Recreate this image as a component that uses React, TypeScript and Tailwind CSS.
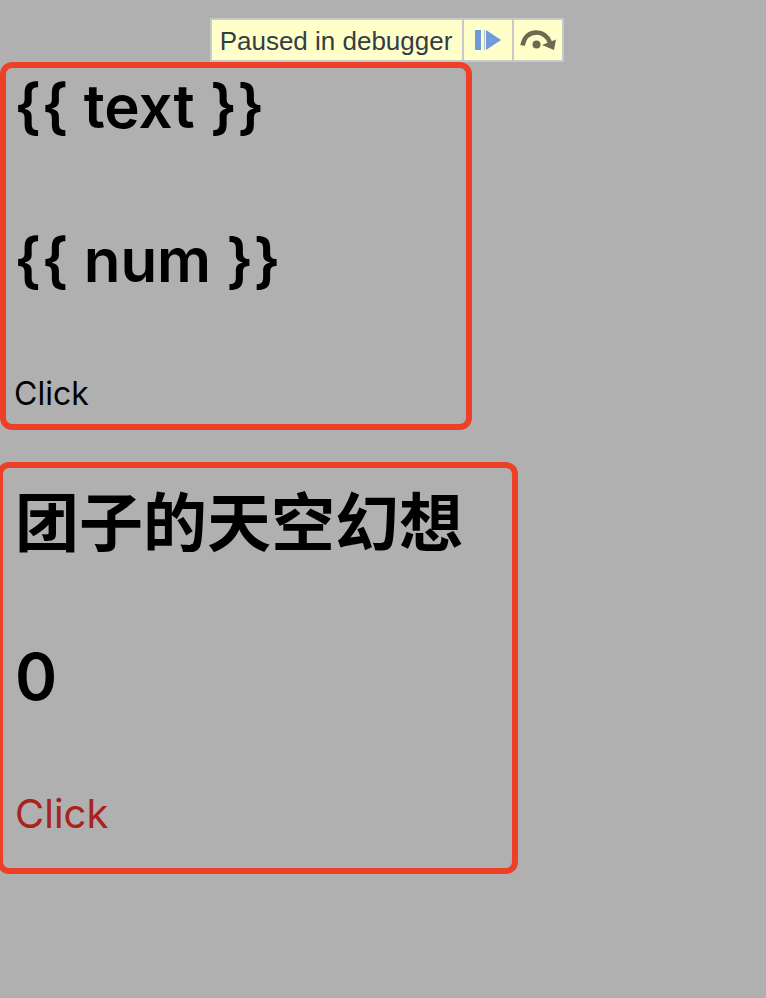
function ResumeIcon() {
  return (
    <svg width="28" height="22" viewBox="0 0 28 22" aria-hidden="true">
      <rect x="1" y="1" width="6" height="20" fill="#7199dc" />
      <rect x="10" y="1" width="1" height="20" fill="#a9c0da" />
      <path d="M12 1 L27 11 L12 21 Z" fill="#7199dc" />
    </svg>
  );
}

function StepOverIcon() {
  return (
    <svg width="36" height="22" viewBox="0 0 36 22" aria-hidden="true">
      <path d="M2.5 16.5 C4.5 7 10 3.5 16.5 3.5 C22.5 3.5 27 6.5 30 13.5" fill="none" stroke="#6b6b50" strokeWidth="4.5" />
      <path d="M36 10.5 L34 21 L22 16 Z" fill="#6b6b50" />
      <circle cx="16.5" cy="15.5" r="4" fill="#6b6b50" />
    </svg>
  );
}

function DebuggerBar() {
  return (
    <header className="flex justify-center pt-[18px] pl-2">
      <div className="flex h-11 divide-x-2 divide-[#c8c8c8] border-2 border-[#c8c8c8] bg-[#ffffc9]">
        <p className="pt-px pr-2.5 pl-2 font-['Liberation_Sans',Arial,sans-serif] text-[26px] leading-10 whitespace-nowrap text-[#333d46]">
          Paused in debugger
        </p>
        <button type="button" aria-label="Resume script execution" className="flex w-[50px] items-center justify-center">
          <ResumeIcon />
        </button>
        <button type="button" aria-label="Step over next function call" className="flex w-12 items-center justify-center">
          <StepOverIcon />
        </button>
      </div>
    </header>
  );
}

export default function App() {
  return (
    <div className="min-h-screen overflow-x-hidden bg-[#b0b0b0] font-[Inter,'Noto_Sans_CJK_SC',sans-serif] text-black">
      <DebuggerBar />
      <main className="flex flex-col items-start">
        <section className="w-[472px] max-w-full rounded-xl border-6 border-[#ee4027] px-2 pb-2.5">
          <h1 className="text-[60px] leading-[77px] font-semibold">{"{{ text }}"}</h1>
          <h1 className="mt-[77px] text-[60px] leading-[77px] font-semibold">{"{{ num }}"}</h1>
          <button type="button" className="mt-[75px] block text-[32px] leading-10">
            Click
          </button>
        </section>
        <section className="mt-8 -ml-[3px] w-[521px] max-w-full rounded-xl border-6 border-[#ee4027] px-3 pt-4 pb-7.5">
          <h1 className="text-[64px] leading-[77px] font-semibold">团子的天空幻想</h1>
          <h1 className="mt-[77px] text-[64px] leading-[77px] font-semibold">0</h1>
          <button type="button" className="mt-[75px] block text-[40px] leading-12 text-[#a8231b]">
            Click
          </button>
        </section>
      </main>
    </div>
  );
}
